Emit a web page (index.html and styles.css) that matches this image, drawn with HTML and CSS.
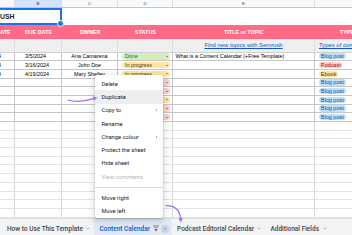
FILE: index.html
```html
<!DOCTYPE html>
<html>
<head>
<meta charset="utf-8">
<title>Content Calendar</title>
<link rel="stylesheet" href="styles.css">
</head>
<body>
<div class="app">
  <div class="grid">
    <div class="rows">
      <div class="row letters">
        <div class="cell a">A</div><div class="cell b sel">B</div><div class="cell c">C</div><div class="cell d">D</div><div class="cell e">E</div><div class="cell f">F</div>
      </div>
      <div class="row title-row">
        <div class="cell title">SEMRUSH</div>
        <div class="cell rest"></div>
      </div>
      <div class="row head">
        <div class="cell a">PUBLISH DATE</div><div class="cell b">DUE DATE</div><div class="cell c">OWNER</div><div class="cell d">STATUS</div><div class="cell e">TITLE or TOPIC</div><div class="cell f">TYPE OF CONTENT</div>
      </div>
      <div class="row links">
        <div class="cell a"></div><div class="cell b"></div><div class="cell c"></div><div class="cell d"></div><div class="cell e center"><span class="link">Find new topics with Semrush</span></div><div class="cell f"><span class="link">Types of content</span></div>
      </div>
      <div class="row data">
        <div class="cell a date">2/28/2024</div><div class="cell b date">3/5/2024</div><div class="cell c center">Ana Camarena</div><div class="cell d"><span class="status done">Done<i class="caret"></i></span></div><div class="cell e text">What is a Content Calendar (+Free Template)</div><div class="cell f"><span class="chip blog">Blog post</span></div>
      </div>
      <div class="row data">
        <div class="cell a date">3/12/2024</div><div class="cell b date">3/16/2024</div><div class="cell c center">John Doe</div><div class="cell d"><span class="status prog">In progress<i class="caret"></i></span></div><div class="cell e"></div><div class="cell f"><span class="chip pod">Podcast</span></div>
      </div>
      <div class="row data">
        <div class="cell a date">4/15/2024</div><div class="cell b date">4/19/2024</div><div class="cell c center">Mary Shelley</div><div class="cell d"><span class="status prog">In progress<i class="caret"></i></span></div><div class="cell e"></div><div class="cell f"><span class="chip ebook">Ebook</span></div>
      </div>
      <div class="row data">
        <div class="cell a"></div><div class="cell b"></div><div class="cell c"></div><div class="cell d"><span class="status todo">Not started<i class="caret"></i></span></div><div class="cell e"></div><div class="cell f"><span class="chip blog">Blog post</span></div>
      </div>
      <div class="row data">
        <div class="cell a"></div><div class="cell b"></div><div class="cell c"></div><div class="cell d"><span class="status todo">Not started<i class="caret"></i></span></div><div class="cell e"></div><div class="cell f"><span class="chip blog">Blog post</span></div>
      </div>
      <div class="row data">
        <div class="cell a"></div><div class="cell b"></div><div class="cell c"></div><div class="cell d"><span class="status prog">In progress<i class="caret"></i></span></div><div class="cell e"></div><div class="cell f"><span class="chip blog">Blog post</span></div>
      </div>
      <div class="row data">
        <div class="cell a"></div><div class="cell b"></div><div class="cell c"></div><div class="cell d"><span class="status todo">Not started<i class="caret"></i></span></div><div class="cell e"></div><div class="cell f"><span class="chip blog">Blog post</span></div>
      </div>
      <div class="row data">
        <div class="cell a"></div><div class="cell b"></div><div class="cell c"></div><div class="cell d"><span class="status todo">Not started<i class="caret"></i></span></div><div class="cell e"></div><div class="cell f"><span class="chip blog">Blog post</span></div>
      </div>
      <div class="row empty"><div class="cell a"></div><div class="cell b"></div><div class="cell c"></div><div class="cell d"></div><div class="cell e"></div><div class="cell f"></div></div>
      <div class="row empty"><div class="cell a"></div><div class="cell b"></div><div class="cell c"></div><div class="cell d"></div><div class="cell e"></div><div class="cell f"></div></div>
      <div class="row empty"><div class="cell a"></div><div class="cell b"></div><div class="cell c"></div><div class="cell d"></div><div class="cell e"></div><div class="cell f"></div></div>
      <div class="row empty"><div class="cell a"></div><div class="cell b"></div><div class="cell c"></div><div class="cell d"></div><div class="cell e"></div><div class="cell f"></div></div>
      <div class="row empty"><div class="cell a"></div><div class="cell b"></div><div class="cell c"></div><div class="cell d"></div><div class="cell e"></div><div class="cell f"></div></div>
      <div class="row empty"><div class="cell a"></div><div class="cell b"></div><div class="cell c"></div><div class="cell d"></div><div class="cell e"></div><div class="cell f"></div></div>
      <div class="row empty"><div class="cell a"></div><div class="cell b"></div><div class="cell c"></div><div class="cell d"></div><div class="cell e"></div><div class="cell f"></div></div>
      <div class="row empty"><div class="cell a"></div><div class="cell b"></div><div class="cell c"></div><div class="cell d"></div><div class="cell e"></div><div class="cell f"></div></div>
      <div class="row empty"><div class="cell a"></div><div class="cell b"></div><div class="cell c"></div><div class="cell d"></div><div class="cell e"></div><div class="cell f"></div></div>
      <div class="row empty"><div class="cell a"></div><div class="cell b"></div><div class="cell c"></div><div class="cell d"></div><div class="cell e"></div><div class="cell f"></div></div>
      <div class="row empty"><div class="cell a"></div><div class="cell b"></div><div class="cell c"></div><div class="cell d"></div><div class="cell e"></div><div class="cell f"></div></div>
    </div>
  </div>

  <div class="tabbar">
    <div class="tab"><span>How to Use This Template</span><i class="caret"></i></div>
    <div class="tab active">
      <span>Content Calendar</span>
      <svg class="tab-icon" width="6" height="7" viewBox="0 0 6 7"><rect x="0" y="0.5" width="6" height="1" fill="#80868b"/><rect x="1" y="2.3" width="4" height="0.8" fill="#80868b"/><path d="M1.5 4 L4.5 4 L3 6.5 Z" fill="#c5221f"/></svg>
      <span class="tab-btn"><i class="caret"></i></span>
    </div>
    <div class="tab"><span>Podcast Editorial Calendar</span><i class="caret"></i></div>
    <div class="tab"><span>Additional Fields</span><i class="caret"></i></div>
  </div>

  <div class="menu">
    <div class="item">Delete</div>
    <div class="item hover">Duplicate</div>
    <div class="item sub">Copy to</div>
    <div class="item">Rename</div>
    <div class="item sub">Change colour</div>
    <div class="item">Protect the sheet</div>
    <div class="item">Hide sheet</div>
    <div class="item disabled">View comments</div>
    <div class="sep"></div>
    <div class="item">Move right</div>
    <div class="item">Move left</div>
  </div>

  <svg class="annot" width="352" height="235" viewBox="0 0 352 235">
    <path d="M68 100 Q79 103.2 94.5 98.4" fill="none" stroke="#9b6df2" stroke-width="1.2" stroke-linecap="round"/>
    <polygon points="97.3,97.9 93.2,95.9 93.9,100.4" fill="#9b6df2"/>
    <path d="M166 205.7 Q179.5 205.5 180.6 218.8" fill="none" stroke="#9b6df2" stroke-width="1.2" stroke-linecap="round"/>
    <polygon points="181,222.5 178.4,218.2 182.8,218.1" fill="#9b6df2"/>
  </svg>
</div>
</body>
</html>
```

FILE: styles.css
```css
* { box-sizing: border-box; }
html, body { margin: 0; padding: 0; }
body {
  width: 352px;
  height: 235px;
  overflow: hidden;
  background: #fff;
  font-family: "Liberation Sans", Arial, sans-serif;
  color: #000;
}
.app { position: relative; width: 352px; height: 235px; overflow: hidden; }

.grid { height: 218px; overflow: hidden; }
.rows { margin-left: -33px; width: 448px; }
.row { display: flex; }
.cell {
  flex: none;
  display: flex;
  align-items: center;
  overflow: hidden;
  white-space: nowrap;
  height: 100%;
}
.a { width: 48px; }
.b { width: 47px; }
.c { width: 56px; }
.d { width: 55px; }
.e { width: 142px; }
.f { width: 100px; }
.center { justify-content: center; }

/* column letters */
.letters { height: 8px; background: #f8f9fa; border-bottom: 1px solid #c4c7c5; }
.letters .cell {
  justify-content: center;
  font-size: 4.3px;
  color: #444746;
  border-right: 1px solid #dadce0;
}
.letters .sel { background: #d3e3fd; color: #1f1f1f; }

/* title row */
.title-row { height: 17px; }
.title {
  position: relative;
  width: 95px;
  border: 2px solid #1a73e8;
  padding-left: 11px;
  font-weight: bold;
  font-size: 6.9px;
  color: #1f1f1f;
  overflow: visible;
}
.title::after {
  content: "";
  position: absolute;
  right: -3.5px;
  bottom: -3.5px;
  width: 5px;
  height: 5px;
  background: #1a73e8;
  border: 1px solid #fff;
  border-radius: 50%;
}
.rest { width: 353px; }

/* pink header */
.head { height: 13.5px; background: #ff6b86; }
.head .cell {
  justify-content: center;
  color: #fff;
  font-weight: bold;
  font-size: 5.4px;
}

/* link row */
.links { height: 14px; background: #efefef; border-bottom: 1px solid #d0d0d0; }
.links .cell { border-right: 1px solid #dcdcdc; }
.links .f { padding-left: 4px; }
.link { color: #1155cc; text-decoration: underline; font-size: 5.9px; }

/* data rows */
.data { height: 8.7px; border-bottom: 1px solid #c6c6c6; }
.data .cell { border-right: 1px solid #c6c6c6; font-size: 5.4px; }
.date { padding-left: 10px; }
.text { padding-left: 2.5px; }

.status {
  display: flex;
  align-items: center;
  justify-content: space-between;
  margin-left: 3.5px;
  width: 48.5px;
  height: 6.4px;
  padding: 0 2.3px 0 3.4px;
  border-radius: 3.5px;
  font-size: 5.4px;
}
.done { background: #d4edbc; color: #11734b; }
.prog { background: #ffe5a0; color: #473821; }
.todo { background: #ffcfc9; color: #b10202; }

.caret {
  display: inline-block;
  width: 0;
  height: 0;
  border-left: 1.6px solid transparent;
  border-right: 1.6px solid transparent;
  border-top: 1.8px solid #444746;
}
.status .caret { border-top-color: #3c4043; }

.chip {
  margin-left: 4px;
  height: 6.2px;
  line-height: 6.2px;
  padding: 0 1.8px;
  border-radius: 3px;
  font-size: 5.5px;
}
.blog { background: #bfe1f6; color: #0a53a8; }
.pod { background: #ffcfc9; color: #b10202; }
.ebook { background: #ffe5a0; color: #473821; }

/* empty rows */
.empty { height: 8.7px; border-bottom: 1px solid #e2e2e2; }
.empty .cell { border-right: 1px solid #d6d6d6; }

/* sheet tabs */
.tabbar {
  display: flex;
  align-items: center;
  height: 20px;
  padding-left: 2px;
  background: #f1f3f4;
  border-top: 1px solid #e0e0e0;
  font-family: Roboto, "Liberation Sans", sans-serif;
  font-weight: 500;
  font-size: 6.5px;
  color: #444746;
  white-space: nowrap;
}
.tab {
  display: flex;
  align-items: center;
  gap: 4.5px;
  height: 100%;
  padding: 0 5px;
  flex: none;
}
.tab .caret { border-top-color: #5f6368; }
.tab.active {
  background: #e1e9f7;
  color: #0b57d0;
  gap: 2.5px;
  padding-right: 3px;
}
.tab-icon { display: block; }
.tab-btn {
  display: flex;
  align-items: center;
  justify-content: center;
  width: 8px;
  height: 8px;
  border-radius: 50%;
  background: #c9d3e3;
}
.tab-btn .caret { border-top-color: #0b57d0; }

/* context menu */
.menu {
  position: absolute;
  left: 95px;
  top: 75px;
  width: 68px;
  padding: 2px 0 1px;
  background: #fff;
  border-radius: 2px;
  box-shadow: 0 1px 2px rgba(60,64,67,.3), 0 2px 6px 2px rgba(60,64,67,.15);
  font-family: Roboto, "Liberation Sans", sans-serif;
  font-size: 5.8px;
  color: #202124;
}
.item {
  display: flex;
  align-items: center;
  justify-content: space-between;
  height: 13.3px;
  padding: 0 6px 0 6.5px;
}
.hover { background: #eeeeee; }
.disabled { color: #b4b6b8; }
.sub::after {
  content: "";
  width: 0;
  height: 0;
  border-top: 1.5px solid transparent;
  border-bottom: 1.5px solid transparent;
  border-left: 1.8px solid #5f6368;
}
.sep { height: 1px; background: #dadce0; margin: 3.5px 0 3px; }

.annot { position: absolute; left: 0; top: 0; pointer-events: none; }
```
